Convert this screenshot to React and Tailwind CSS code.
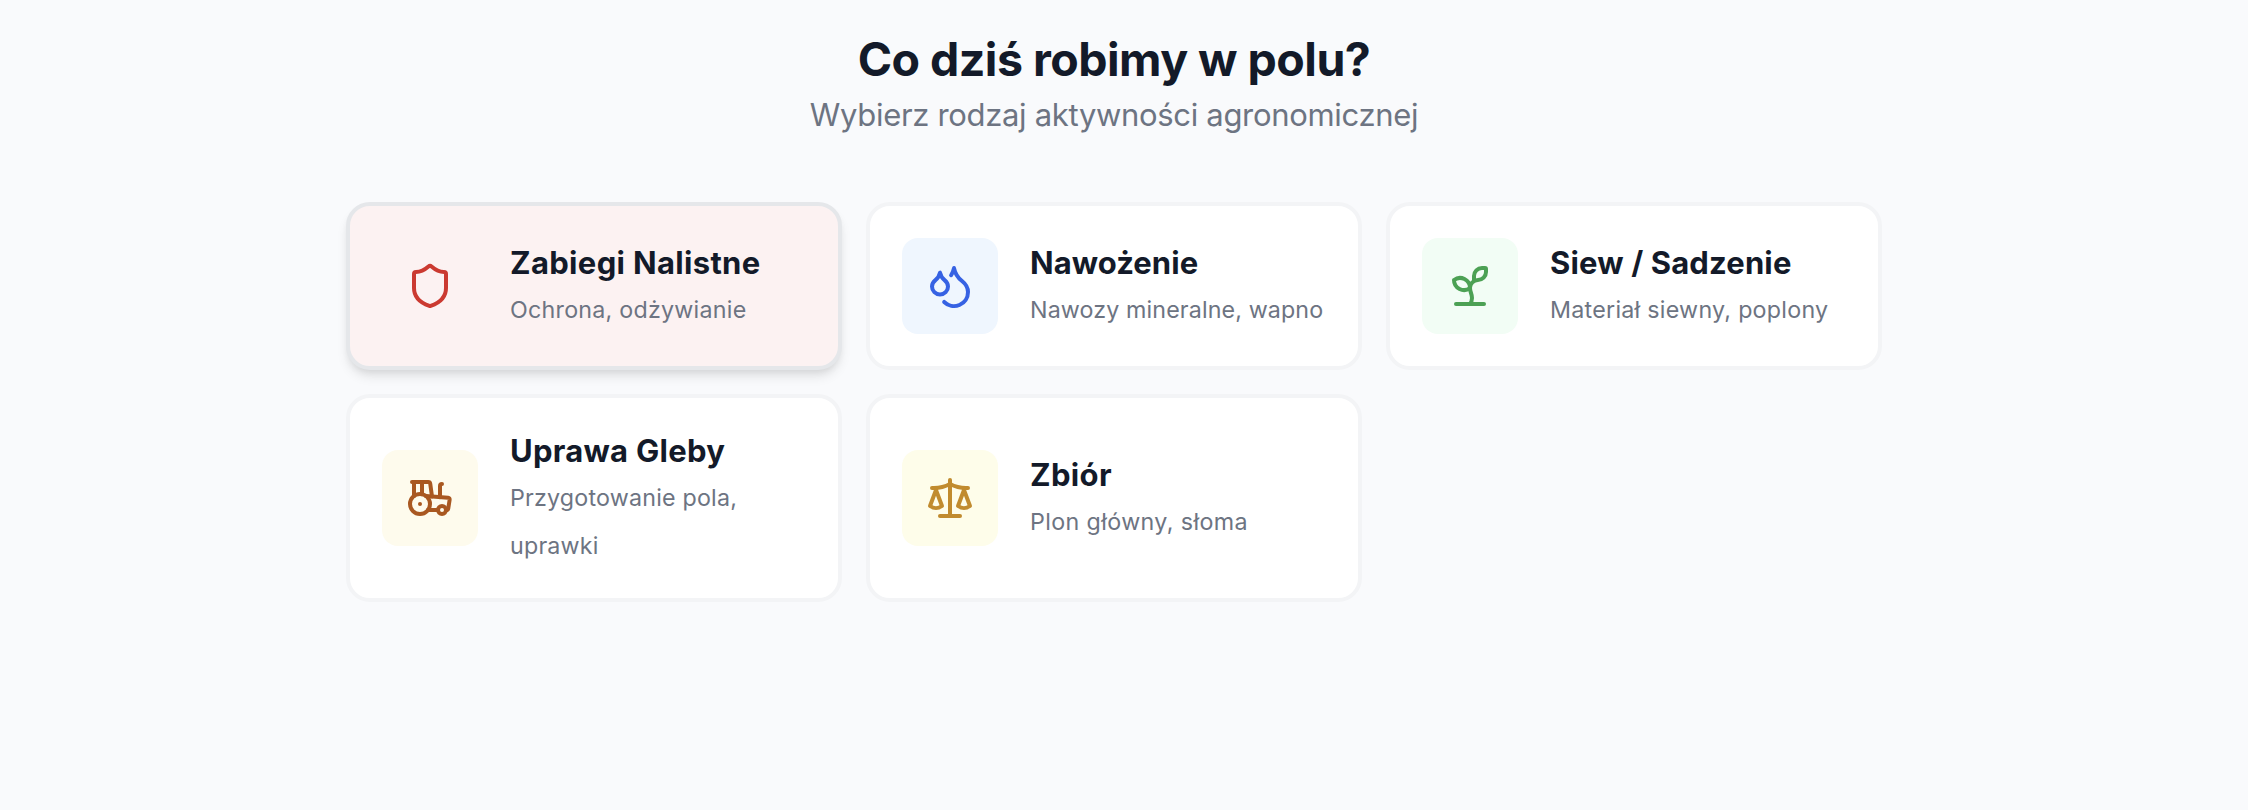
import { Droplets, Scale, Shield, Sprout, Tractor } from "lucide-react";
import { clsx } from "clsx";

const activities = [
  {
    id: "spray",
    title: "Zabiegi Nalistne",
    description: "Ochrona, odżywianie",
    icon: Shield,
    iconClass: "bg-[#fcf2f2] text-[#cb3a31]",
    titleClass: "tracking-[0.33px]",
    descriptionClass: "tracking-[0.24px]",
    active: true,
  },
  {
    id: "fertilize",
    title: "Nawożenie",
    description: "Nawozy mineralne, wapno",
    icon: Droplets,
    iconClass: "bg-[#eff6fe] text-[#3662e3]",
    titleClass: "tracking-[0.05px]",
    descriptionClass: "tracking-[0.12px]",
  },
  {
    id: "sow",
    title: "Siew / Sadzenie",
    description: "Materiał siewny, poplony",
    icon: Sprout,
    iconClass: "bg-[#f2fdf5] text-[#4ca154]",
    titleClass: "tracking-[0.14px]",
    descriptionClass: "tracking-[0.26px]",
  },
  {
    id: "tillage",
    title: "Uprawa Gleby",
    description: "Przygotowanie pola, uprawki",
    icon: Tractor,
    iconClass: "bg-[#fefbed] text-[#a95821]",
    titleClass: "tracking-[0.28px]",
    descriptionClass: "tracking-[0.2px]",
  },
  {
    id: "harvest",
    title: "Zbiór",
    description: "Plon główny, słoma",
    icon: Scale,
    iconClass: "bg-[#fefdea] text-[#c18b2e]",
    titleClass: "tracking-[0.35px]",
    descriptionClass: "tracking-[0.38px]",
  },
];

const ActivityCard = ({ activity }) => {
  const Icon = activity.icon;

  return (
    <button
      className={clsx(
        "flex items-center gap-8 rounded-3xl border-4 p-8 text-left",
        activity.active
          ? "border-[#e5e7ea] bg-[#fcf2f2] shadow-[0_8px_12px_-2px_rgba(0,0,0,0.1),0_4px_8px_-4px_rgba(0,0,0,0.1)]"
          : "border-[#f3f4f6] bg-white"
      )}
    >
      <div className={clsx("flex size-24 shrink-0 items-center justify-center rounded-2xl", activity.iconClass)}>
        <Icon className="size-12" />
      </div>
      <div className="min-w-0 flex-1">
        <h3 className={clsx("mt-px text-[31px] leading-10 font-bold text-[#131a29]", activity.titleClass)}>
          {activity.title}
        </h3>
        <p className={clsx("mt-[3px] -mb-1 text-[23.25px] leading-[48px] text-[#6d7482]", activity.descriptionClass)}>
          {activity.description}
        </p>
      </div>
    </button>
  );
};

const App = () => {
  return (
    <div className="min-h-screen bg-[#f9fafc] pr-5 font-['Inter',sans-serif]">
      <div className="mx-auto w-[1536px] pt-[27px]">
        <div className="mb-[63px] text-center">
          <h2 className="text-[46.5px] leading-[64px] font-bold tracking-[-0.53px] text-[#131a29]">
            Co dziś robimy w polu?
          </h2>
          <p className="text-[31px] leading-[48px] tracking-[-0.32px] text-[#6d7482]">
            Wybierz rodzaj aktywności agronomicznej
          </p>
        </div>

        <div className="grid grid-cols-3 gap-6">
          {activities.map((activity) => (
            <ActivityCard key={activity.id} activity={activity} />
          ))}
        </div>
      </div>
    </div>
  );
};
export default App;
